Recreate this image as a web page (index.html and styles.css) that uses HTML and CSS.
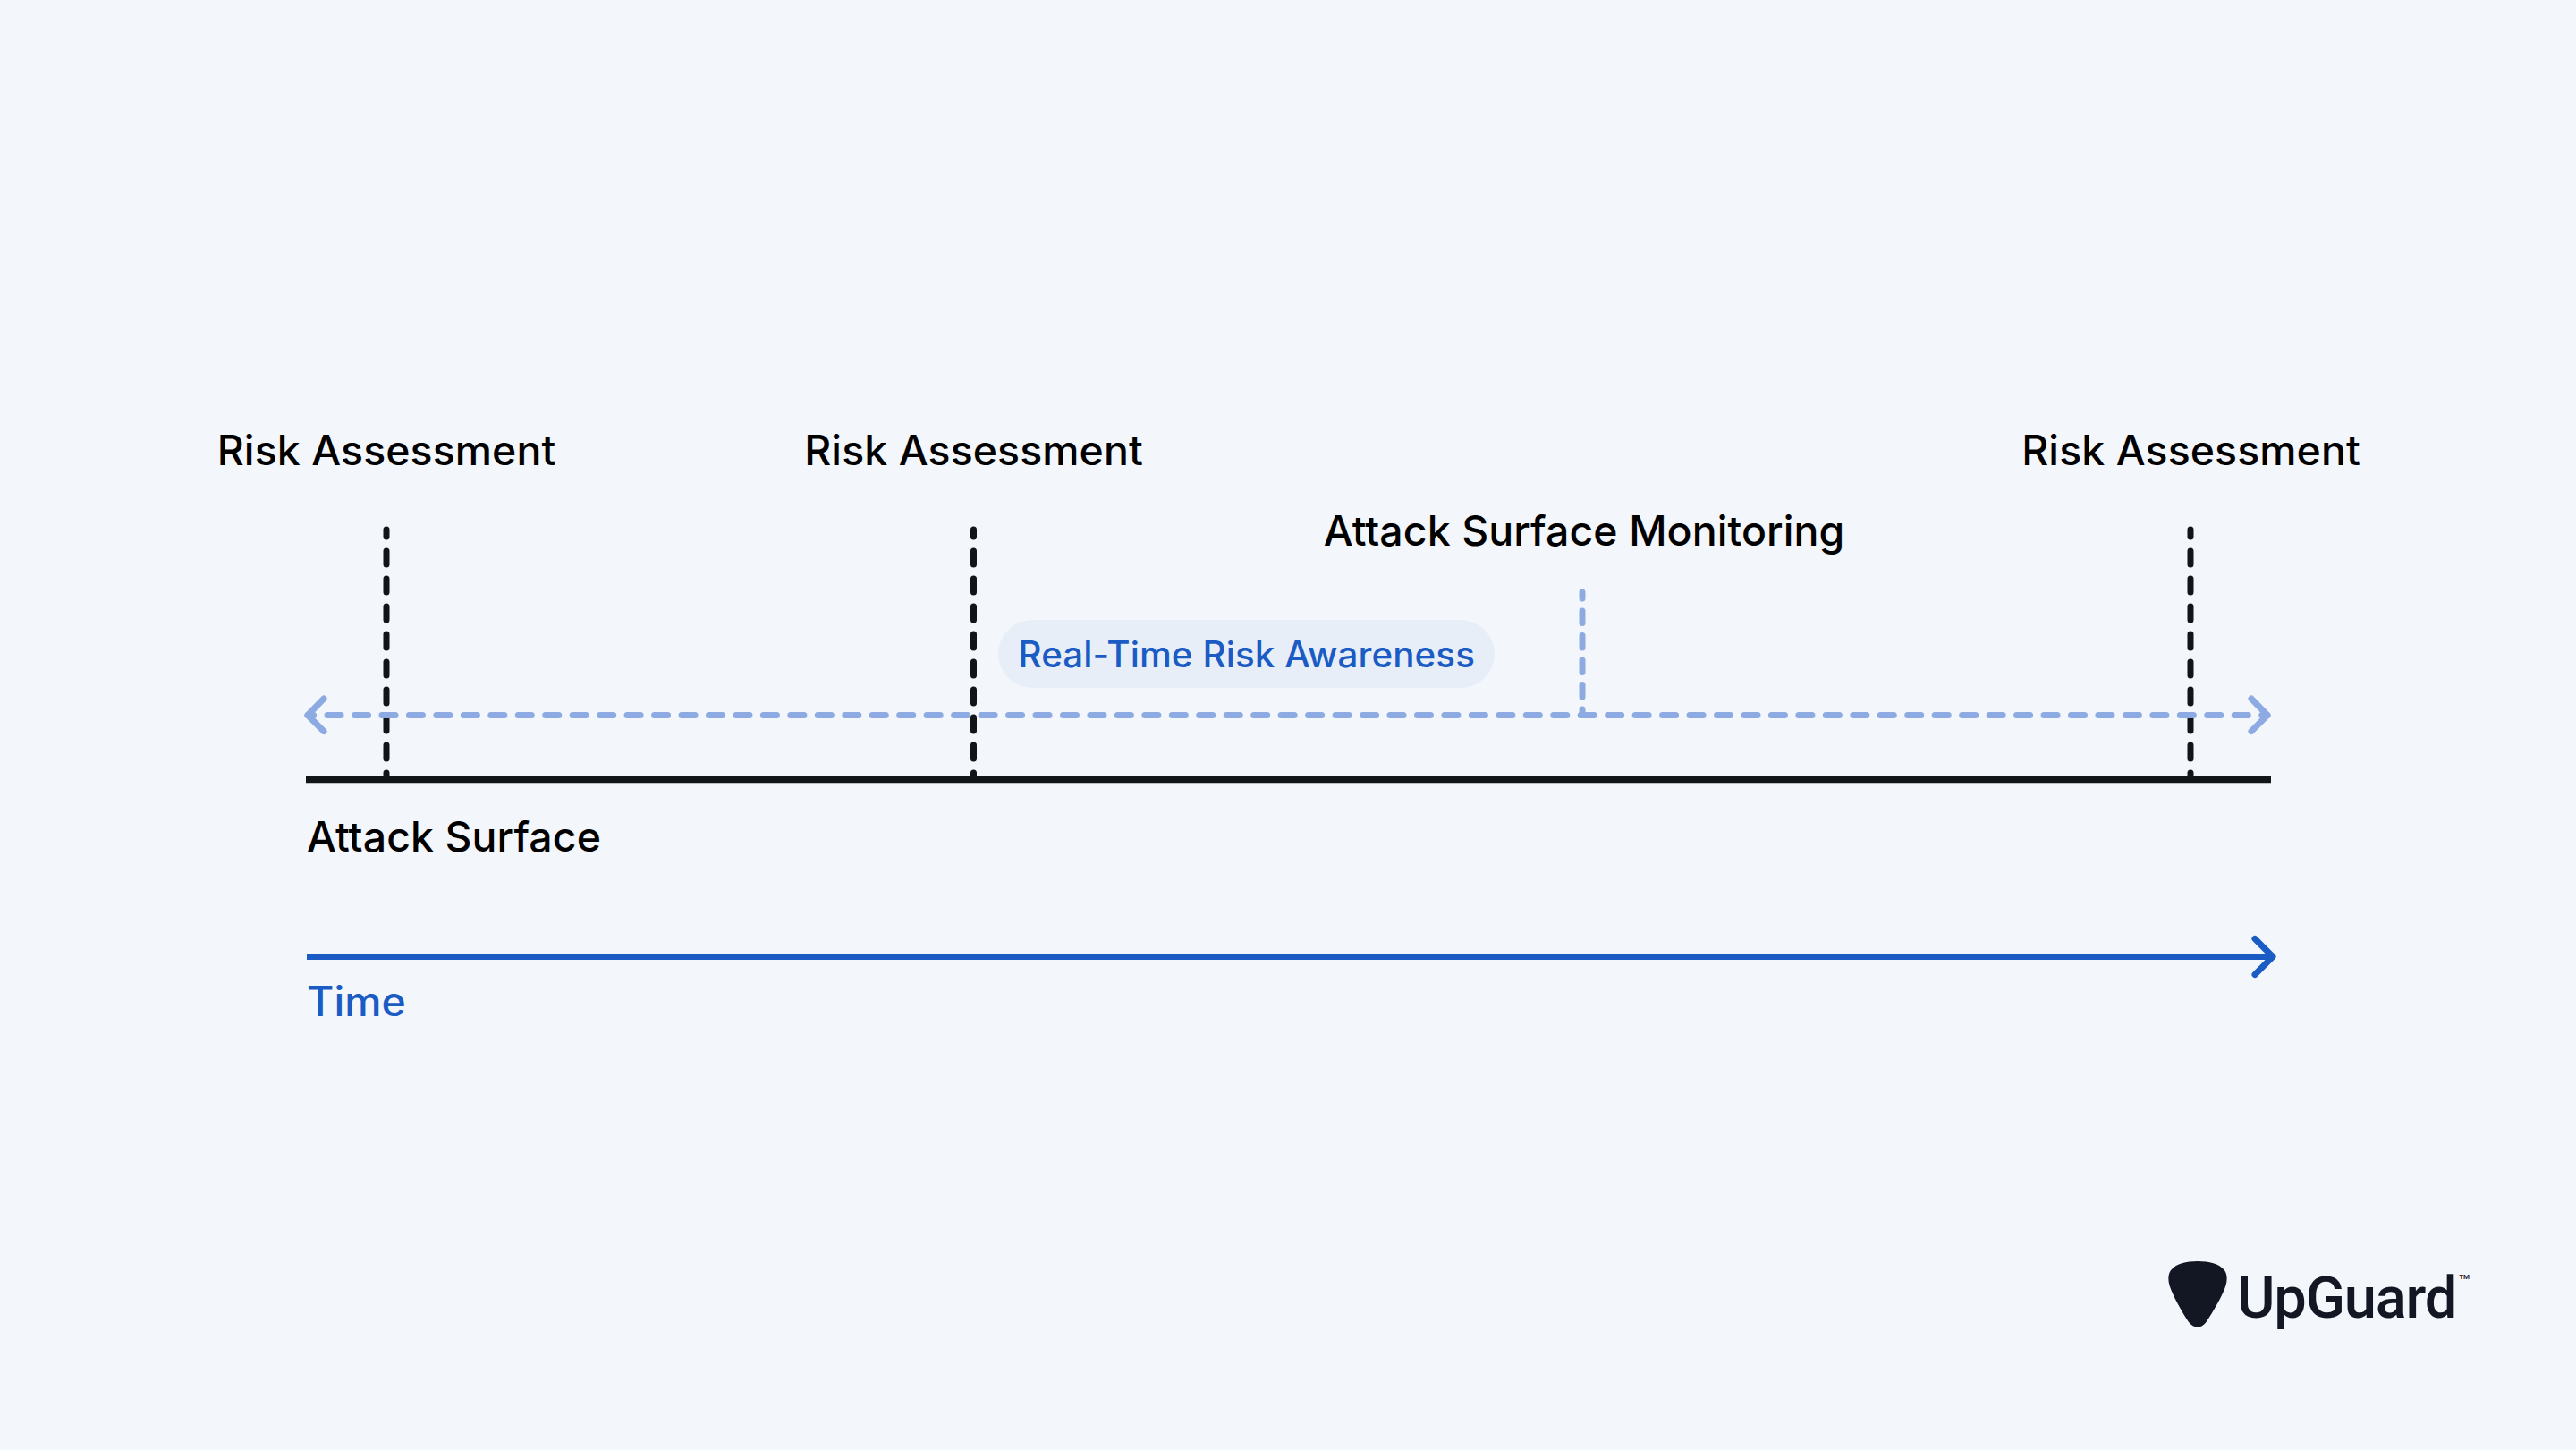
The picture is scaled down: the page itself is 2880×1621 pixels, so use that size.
FILE: index.html
```html
<!DOCTYPE html>
<html lang="en">
<head>
<meta charset="utf-8">
<title>Attack Surface Monitoring</title>
<link rel="stylesheet" href="styles.css">
</head>
<body>
<main class="canvas">
  <svg class="lines" width="2880" height="1621" viewBox="0 0 2880 1621" fill="none">
    <path class="tick" d="M432 592V867"/>
    <path class="tick" d="M1088.500 592V867"/>
    <path class="tick" d="M2449 592V867"/>
    <path class="surface" d="M342 871.200H2539"/>
    <path class="monitor-tick" d="M1769 662V799"/>
    <path class="monitor" d="M344 799.500H2535"/>
    <path class="monitor-head" d="M362 781L344 799.500L362 817.500M2517 781L2535 799.500L2517 817.500"/>
    <path class="time" d="M343 1069.500H2539"/>
    <path class="time-head" d="M2521 1049.500L2541 1069.500L2521 1089.500"/>
  </svg>

  <span class="label centered risk-a">Risk Assessment</span>
  <span class="label centered risk-b">Risk Assessment</span>
  <span class="label centered risk-c">Risk Assessment</span>
  <span class="label centered monitoring">Attack Surface Monitoring</span>
  <span class="pill">Real-Time Risk Awareness</span>
  <span class="label surface-label">Attack Surface</span>
  <span class="label time-label">Time</span>

  <div class="logo">
    <svg class="pick" width="66" height="74" viewBox="0 0 66 74">
      <path d="M33 0C46 0 57 3 62 9C66 13 66.500 20 64.500 27C61 38 50 57 42.500 68C39.500 72 36.500 73.500 33 73.500C29.500 73.500 26 72 23 68C15.500 57 5 38 1.500 27C-.5 20 0 13 4 9C9 3 20 0 33 0Z"/>
    </svg>
    <span class="wordmark">UpGuard</span>
    <span class="tm">TM</span>
  </div>
</main>
</body>
</html>
```
FILE: styles.css
```css
html, body {
  margin: 0;
  padding: 0;
  background: #f3f6fb;
}

.canvas {
  position: relative;
  width: 2880px;
  height: 1621px;
  overflow: hidden;
  background: #f3f6fb;
  font-family: Inter, "Liberation Sans", sans-serif;
}

.lines {
  position: absolute;
  left: 0;
  top: 0;
}

.tick {
  stroke: #111518;
  stroke-width: 7;
  stroke-linecap: round;
  stroke-dasharray: 15 16;
  stroke-dashoffset: 7;
}

.surface {
  stroke: #111518;
  stroke-width: 8;
}

.monitor-tick {
  stroke: #8dabe2;
  stroke-width: 7;
  stroke-linecap: round;
  stroke-dasharray: 13.500 14;
  stroke-dashoffset: 6.500;
}

.monitor {
  stroke: #8dabe2;
  stroke-width: 7;
  stroke-linecap: round;
  stroke-dasharray: 15 15.460;
  stroke-dashoffset: 8.400;
}

.monitor-head {
  stroke: #8dabe2;
  stroke-width: 7;
  stroke-linecap: round;
  stroke-linejoin: round;
}

.time {
  stroke: #1a5bc4;
  stroke-width: 7;
}

.time-head {
  stroke: #1a5bc4;
  stroke-width: 7;
  stroke-linecap: round;
  stroke-linejoin: round;
}

.label {
  position: absolute;
  font-size: 46.400px;
  line-height: 58px;
  font-weight: 460;
  letter-spacing: 0.100px;
  color: #000;
  white-space: nowrap;
}

.centered {
  transform: translateX(-50%);
}

.risk-a { left: 432px; top: 473.500px; }
.risk-b { left: 1088.500px; top: 473.500px; }
.risk-c { left: 2449.500px; top: 473.500px; }
.monitoring { left: 1771px; top: 563.500px; }
.surface-label { left: 343px; top: 905.500px; }
.time-label { left: 343px; top: 1090px; color: #1a5bc4; }

.pill {
  position: absolute;
  left: 1116px;
  top: 693px;
  height: 76px;
  padding: 0 22.500px;
  border-radius: 38px;
  background: #e8eef8;
  color: #1a5bc4;
  font-size: 40.300px;
  line-height: 77px;
  font-weight: 460;
  letter-spacing: 0.100px;
  white-space: nowrap;
}

.logo {
  position: absolute;
  left: 2424px;
  top: 1410px;
  display: flex;
  align-items: flex-start;
}

.pick {
  display: block;
  fill: #131723;
}

.wordmark {
  margin-left: 11px;
  margin-top: 3px;
  font-family: Roboto, "Liberation Sans", sans-serif;
  font-weight: 500;
  font-size: 65px;
  line-height: 76px;
  letter-spacing: -1.200px;
  color: #131723;
  white-space: nowrap;
}

.tm {
  margin-left: 3px;
  margin-top: 12px;
  font-family: Roboto, "Liberation Sans", sans-serif;
  font-size: 8px;
  line-height: 12px;
  font-weight: 500;
  color: #131723;
}
```
